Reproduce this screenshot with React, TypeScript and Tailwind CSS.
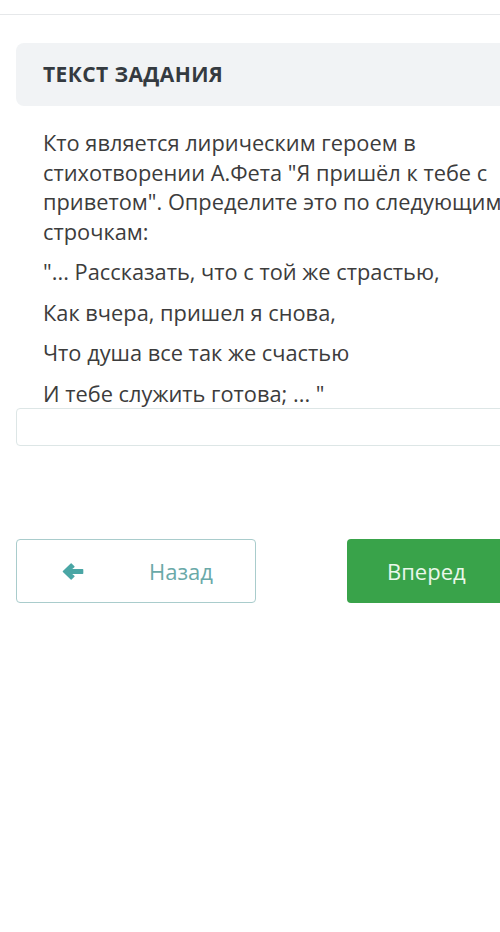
const font = { fontFamily: '"Open Sans", "Liberation Sans", sans-serif' }

function BackArrow() {
  return (
    <svg viewBox="0 0 24 20" className="w-[22px] h-[19px] text-[#4aa6a5]" fill="currentColor">
      <path
        d="M1.5 10 L10 1.8 L13 4.8 L9 8 H22.5 V12 H9 L13 15.2 L10 18.2 Z"
        stroke="currentColor"
        strokeWidth="1.5"
        strokeLinejoin="round"
      />
    </svg>
  )
}

export default function App() {
  return (
    <div className="w-[500px] h-[932px] overflow-hidden bg-white" style={font}>
      <div className="w-[600px]">
        <div className="h-[15px] border-b border-[#e6e8ea]" />
        <div className="pl-4 pr-3 pt-[28px]">
          <div className="h-[63px] rounded-lg bg-[#f1f3f5] flex items-center pl-[27px]">
            <h2 className="text-[21px] font-bold text-[#343a40] tracking-[0.4px]">ТЕКСТ ЗАДАНИЯ</h2>
          </div>

          <div className="pl-[27px] pt-[22px] w-[505px] text-[21.8px] leading-[29.5px] text-[#3c3c3c]">
            <p className="mb-[11px]">
              Кто является лирическим героем в стихотворении А.Фета "Я пришёл к тебе с приветом". Определите это по следующим строчкам:
            </p>
            <p className="mb-[11px]">"... Рассказать, что с той же страстью,</p>
            <p className="mb-[11px]">Как вчера, пришел я снова,</p>
            <p className="mb-[11px]">Что душа все так же счастью</p>
            <p>И тебе служить готова; ... "</p>
          </div>

          <div className="h-[38px] rounded border border-[#dde6e6] bg-white" />

          <div className="mt-[93px] flex gap-[91px]">
            <button className="w-[240px] h-[64px] rounded border border-[#a9cccc] bg-white flex items-center pl-[45px]">
              <BackArrow />
              <span className="ml-[65px] text-[22px] text-[#6aa9a8]">Назад</span>
            </button>
            <button className="w-[240px] h-[64px] rounded bg-[#39a34a] flex items-center pl-[40px]">
              <span className="text-[22px] text-[#eaf7ea]">Вперед</span>
            </button>
          </div>
        </div>
      </div>
    </div>
  )
}
